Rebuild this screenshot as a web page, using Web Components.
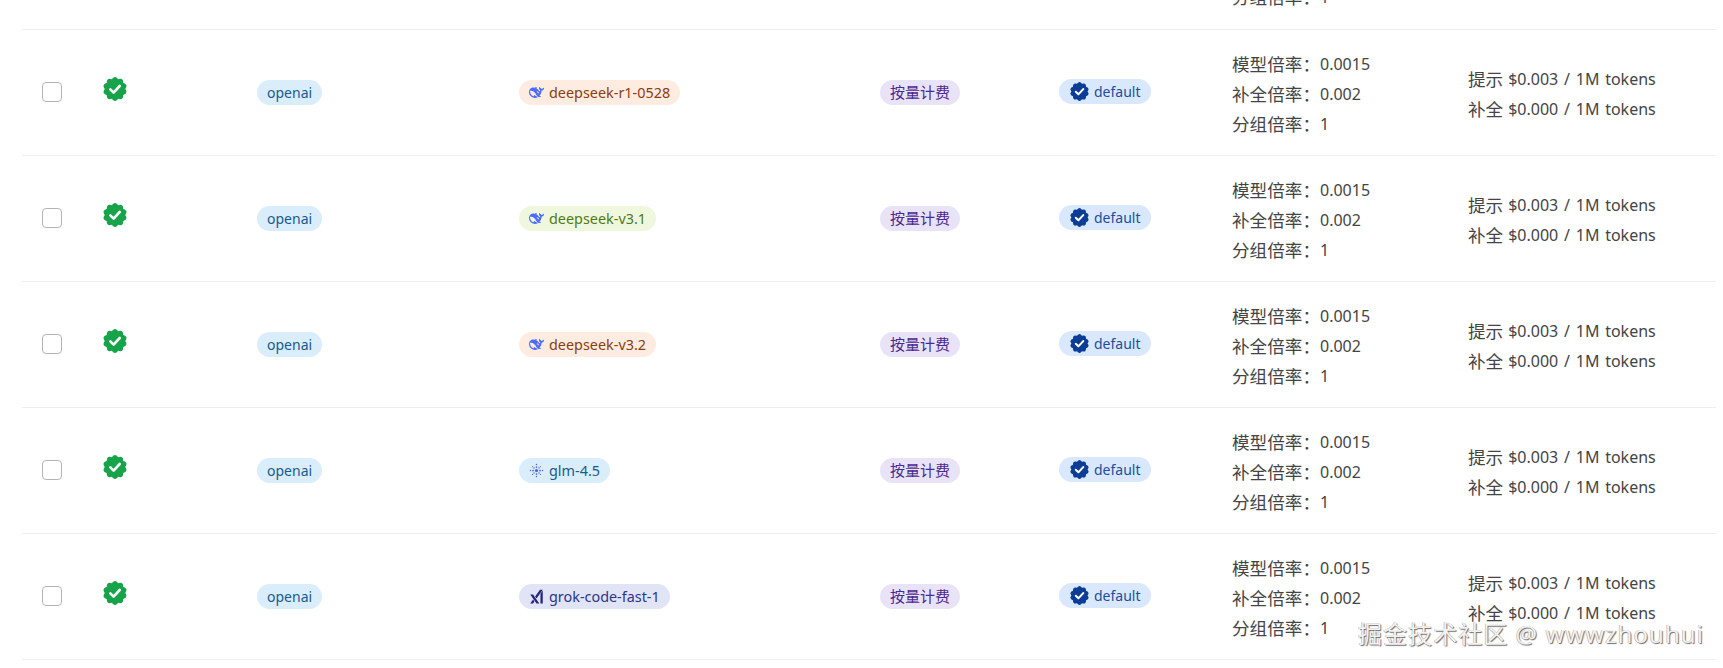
<!DOCTYPE html>
<html lang="zh"><head><meta charset="utf-8"><title>模型倍率</title>
<style>
html,body{margin:0;height:668px;overflow:hidden;background:#fff}
body{font-family:"Noto Sans","Noto Sans CJK SC",sans-serif;color:#333}
</style></head><body>
<log-table>
  <ratio-stub></ratio-stub>
  <log-row icon="deepseek" model="deepseek-r1-0528" tone="orange"></log-row>
  <log-row icon="deepseek" model="deepseek-v3.1" tone="lime"></log-row>
  <log-row icon="deepseek" model="deepseek-v3.2" tone="orange"></log-row>
  <log-row icon="glm" model="glm-4.5" tone="sky"></log-row>
  <log-row icon="xai" model="grok-code-fast-1" tone="indigo"></log-row>
</log-table>
<water-mark>掘金技术社区 @ wwwzhouhui</water-mark>
<script>
function badgePath(){
  const n=10,cx=12,cy=12,R=14.2,r=10.2;let d='';
  for(let i=0;i<n;i++){
    const a=(i/n)*Math.PI*2-Math.PI/2,b=((i+.5)/n)*Math.PI*2-Math.PI/2;
    const p=[cx+r*Math.cos(a-Math.PI/n),cy+r*Math.sin(a-Math.PI/n)];
    const c=[cx+R*Math.cos(a),cy+R*Math.sin(a)];
    const e=[cx+r*Math.cos(b),cy+r*Math.sin(b)];
    if(i===0)d+=`M${p[0].toFixed(2)} ${p[1].toFixed(2)}`;
    d+=`Q${c[0].toFixed(2)} ${c[1].toFixed(2)} ${e[0].toFixed(2)} ${e[1].toFixed(2)}`;
  }
  return d+'Z';
}
class VerifiedBadge extends HTMLElement{
  connectedCallback(){
    const s=this.getAttribute('size')||24,c=this.getAttribute('color')||'#16a34a';
    this.attachShadow({mode:'open'}).innerHTML=`<style>:host{display:inline-flex;width:${s}px;height:${s}px}svg{width:100%;height:100%;display:block}</style>
    <svg viewBox="0 0 24 24"><path fill="${c}" d="${badgePath()}"/><path d="M7.3 12.4l3.3 3.2 6.1-6.6" fill="none" stroke="#fff" stroke-width="2.6" stroke-linecap="round" stroke-linejoin="round"/></svg>`;
  }
}
customElements.define('verified-badge',VerifiedBadge);

function glmDots(){
  let s='<circle cx="12" cy="12" r="2.6"/>';
  for(let i=0;i<8;i++){
    const a=i*Math.PI/4;
    const big=i%2===0;
    [[5.6,big?1.4:1.1],[big?9.6:8.8,big?1.2:.9]].forEach(([d,r])=>{
      s+=`<circle cx="${(12+d*Math.cos(a)).toFixed(2)}" cy="${(12+d*Math.sin(a)).toFixed(2)}" r="${r}"/>`;
    });
  }
  return s;
}
const ICONS={
 deepseek:`<svg viewBox="0 0 24 24"><path fill="#4d6bfe" d="M23.748 4.482c-.254-.124-.364.113-.512.234-.051.039-.094.09-.137.136-.372.397-.806.657-1.373.626-.829-.046-1.537.214-2.163.848-.133-.782-.575-1.248-1.247-1.548-.352-.156-.708-.311-.955-.65-.172-.241-.219-.51-.305-.774-.055-.16-.11-.323-.293-.35-.2-.031-.278.136-.356.276-.313.572-.434 1.202-.422 1.84.027 1.436.633 2.58 1.838 3.393.137.093.172.187.129.323-.082.28-.18.552-.266.833-.055.179-.137.217-.329.14a5.526 5.526 0 01-1.736-1.18c-.857-.828-1.631-1.742-2.597-2.458a11.365 11.365 0 00-.689-.471c-.985-.957.13-1.743.388-1.836.27-.098.093-.432-.779-.428-.872.004-1.67.295-2.687.684a3.055 3.055 0 01-.465.137 9.597 9.597 0 00-2.883-.102c-1.885.21-3.39 1.102-4.497 2.623C.082 8.606-.231 10.684.152 12.85c.403 2.284 1.569 4.175 3.36 5.653 1.858 1.533 3.997 2.284 6.438 2.14 1.482-.085 3.133-.284 4.994-1.86.47.234.962.327 1.78.397.63.059 1.236-.03 1.705-.128.735-.156.684-.837.419-.961-2.155-1.004-1.682-.595-2.113-.926 1.096-1.296 2.746-2.642 3.392-7.003.05-.347.007-.565 0-.845-.004-.17.035-.237.23-.256a4.173 4.173 0 001.545-.475c1.396-.763 1.96-2.015 2.093-3.517.02-.23-.004-.467-.247-.588zM11.581 18c-2.089-1.642-3.102-2.183-3.52-2.16-.392.024-.321.471-.235.763.09.288.207.486.371.739.114.167.192.416-.113.603-.673.416-1.842-.14-1.897-.167-1.361-.802-2.5-1.86-3.301-3.307-.774-1.393-1.224-2.887-1.298-4.482-.02-.386.093-.522.477-.592a4.696 4.696 0 011.529-.039c2.132.312 3.946 1.265 5.468 2.774.868.86 1.525 1.887 2.202 2.891.72 1.066 1.494 2.082 2.48 2.914.348.292.625.514.891.677-.802.09-2.14.11-3.054-.614zm1-6.44a.306.306 0 01.415-.287.302.302 0 01.2.288.306.306 0 01-.31.307.303.303 0 01-.305-.308zm3.11 1.596c-.2.081-.399.151-.59.16a1.245 1.245 0 01-.798-.254c-.274-.23-.47-.358-.552-.758a1.73 1.73 0 01.016-.588c.07-.327-.008-.537-.239-.727-.187-.156-.426-.199-.688-.199a.559.559 0 01-.254-.078c-.11-.054-.2-.19-.114-.358.028-.054.16-.186.192-.21.356-.202.767-.136 1.146.016.352.144.618.408 1.001.782.391.451.462.576.685.914.176.265.336.537.445.848.067.195-.019.354-.25.452z"/></svg>`,
 glm:`<svg viewBox="0 0 24 24" fill="#3f4fd0" opacity=".85">${glmDots()}</svg>`,
 xai:`<svg viewBox="0 0 24 24"><path fill="#25257f" d="M6.469 8.776L16.512 23h-4.464L2.005 8.776H6.47zm-.004 7.9l2.233 3.164L6.467 23H2l4.465-6.324zM22 2.582V23h-3.659V7.764L22 2.582zM22 1l-9.952 14.095-2.233-3.163L17.533 1H22z"/></svg>`
};
const TONES={
 sky:['#d9edfb','#1b5a8e'],orange:['#fdecdf','#8a3d12'],lime:['#eff8de','#4f7a12'],
 indigo:['#e1e4f4','#2e3487'],purple:['#e9e3f7','#4a2a90'],blue:['#d9e8fc','#1d4e9c']
};
const pillTpl=document.createElement('template');
pillTpl.innerHTML=`<style>
:host{display:inline-flex;align-items:center;height:25px;border-radius:13px;padding:0 var(--pad-r,10px) 0 var(--pad-l,10px);gap:5px;font-size:var(--fs,14px);line-height:25px;white-space:nowrap;background:var(--bg);color:var(--fg)}
::slotted(svg){width:15px;height:15px;display:block;flex:none}
</style><slot name="icon"></slot><slot></slot>`;
class TagPill extends HTMLElement{
  constructor(){super();this.attachShadow({mode:'open'}).appendChild(pillTpl.content.cloneNode(true));}
  connectedCallback(){
    const t=TONES[this.getAttribute('tone')]||TONES.sky;
    this.style.setProperty('--bg',t[0]);this.style.setProperty('--fg',t[1]);
  }
}
customElements.define('tag-pill',TagPill);

const checkTpl=document.createElement('template');
checkTpl.innerHTML=`<style>:host{display:block;width:20px;height:20px;box-sizing:border-box;border:1.5px solid #b4b4b4;border-radius:4px;background:#fff}</style>`;
class RowCheck extends HTMLElement{
  constructor(){super();this.attachShadow({mode:'open'}).appendChild(checkTpl.content.cloneNode(true));}
}
customElements.define('row-check',RowCheck);

const stackCss=`:host{display:block;font-size:16px;color:#444}
.l{height:30px;line-height:30px;white-space:nowrap;display:flex;align-items:center}
.c{font-size:17.6px;font-family:"Noto Sans CJK SC",sans-serif;font-weight:400;color:#444}`;
class RatioList extends HTMLElement{
  connectedCallback(){
    const only=this.hasAttribute('last');
    const rows=[['模型倍率：','0.0015'],['补全倍率：','0.002'],['分组倍率：','1']].slice(only?2:0);
    this.attachShadow({mode:'open'}).innerHTML=`<style>${stackCss}</style>`+rows.map(r=>`<div class="l"><span class="c">${r[0]}</span><span>${r[1]}</span></div>`).join('');
  }
}
customElements.define('ratio-list',RatioList);
class PriceList extends HTMLElement{
  connectedCallback(){
    const rows=[['提示','$0.003 / 1M tokens'],['补全','$0.000 / 1M tokens']];
    this.attachShadow({mode:'open'}).innerHTML=`<style>${stackCss}.c{margin-right:5px}.t{word-spacing:1.6px}</style>`+rows.map(r=>`<div class="l"><span class="c">${r[0]}</span><span class="t">${r[1]}</span></div>`).join('');
  }
}
customElements.define('price-list',PriceList);

const tableTpl=document.createElement('template');
tableTpl.innerHTML=`<style>:host{display:block;padding:0 7px 0 22px}</style><slot></slot>`;
class LogTable extends HTMLElement{
  constructor(){super();this.attachShadow({mode:'open'}).appendChild(tableTpl.content.cloneNode(true));}
}
customElements.define('log-table',LogTable);

const stubTpl=document.createElement('template');
stubTpl.innerHTML=`<style>:host{display:flex;align-items:flex-end;height:30px;overflow:hidden;box-sizing:border-box;border-bottom:1px solid #eceef0;padding:0 0 17px 1210px}</style><ratio-list last></ratio-list>`;
class RatioStub extends HTMLElement{
  constructor(){super();this.attachShadow({mode:'open'}).appendChild(stubTpl.content.cloneNode(true));}
}
customElements.define('ratio-stub',RatioStub);

class LogRow extends HTMLElement{
  connectedCallback(){
    const m=this.getAttribute('model'),tone=this.getAttribute('tone'),ic=ICONS[this.getAttribute('icon')];
    this.attachShadow({mode:'open'}).innerHTML=`<style>
    :host{display:grid;grid-template-columns:61px 154px 262px 361px 179px 173px 236px 1fr;align-items:center;height:126px;box-sizing:border-box;border-bottom:1px solid #eceef0;padding-left:20px}
    .cell{display:flex;align-items:center}
    .chk{margin-top:-1px}.badge{margin-top:-7px}.grp{margin-top:-3px}.ratio{margin-top:2px}.price{margin-top:3px}
    </style>
    <div class="cell chk"><row-check></row-check></div>
    <div class="cell badge"><verified-badge></verified-badge></div>
    <div class="cell"><tag-pill tone="sky">openai</tag-pill></div>
    <div class="cell"><tag-pill tone="${tone}" style="--fs:14.4px">${ic.replace('<svg','<svg slot="icon"')}${m}</tag-pill></div>
    <div class="cell"><tag-pill tone="purple" style="--fs:15px">按量计费</tag-pill></div>
    <div class="cell grp"><tag-pill tone="blue" style="--pad-l:11px"><verified-badge slot="icon" size="19" color="#0b3d96"></verified-badge>default</tag-pill></div>
    <div class="cell ratio"><ratio-list></ratio-list></div>
    <div class="cell price"><price-list></price-list></div>`;
  }
}
customElements.define('log-row',LogRow);

const wmTpl=document.createElement('template');
wmTpl.innerHTML=`<style>:host{position:absolute;left:1358px;top:617px;font-size:24px;line-height:34px;white-space:nowrap;color:#f2f2f2;letter-spacing:1.05px;text-shadow:1px 1px 1px #6c6c6c,-.5px -.5px 0 #aaa;font-family:"Noto Sans","Noto Sans CJK SC",sans-serif}</style><slot></slot>`;
class WaterMark extends HTMLElement{
  constructor(){super();this.attachShadow({mode:'open'}).appendChild(wmTpl.content.cloneNode(true));}
}
customElements.define('water-mark',WaterMark);
</script>
</body></html>
